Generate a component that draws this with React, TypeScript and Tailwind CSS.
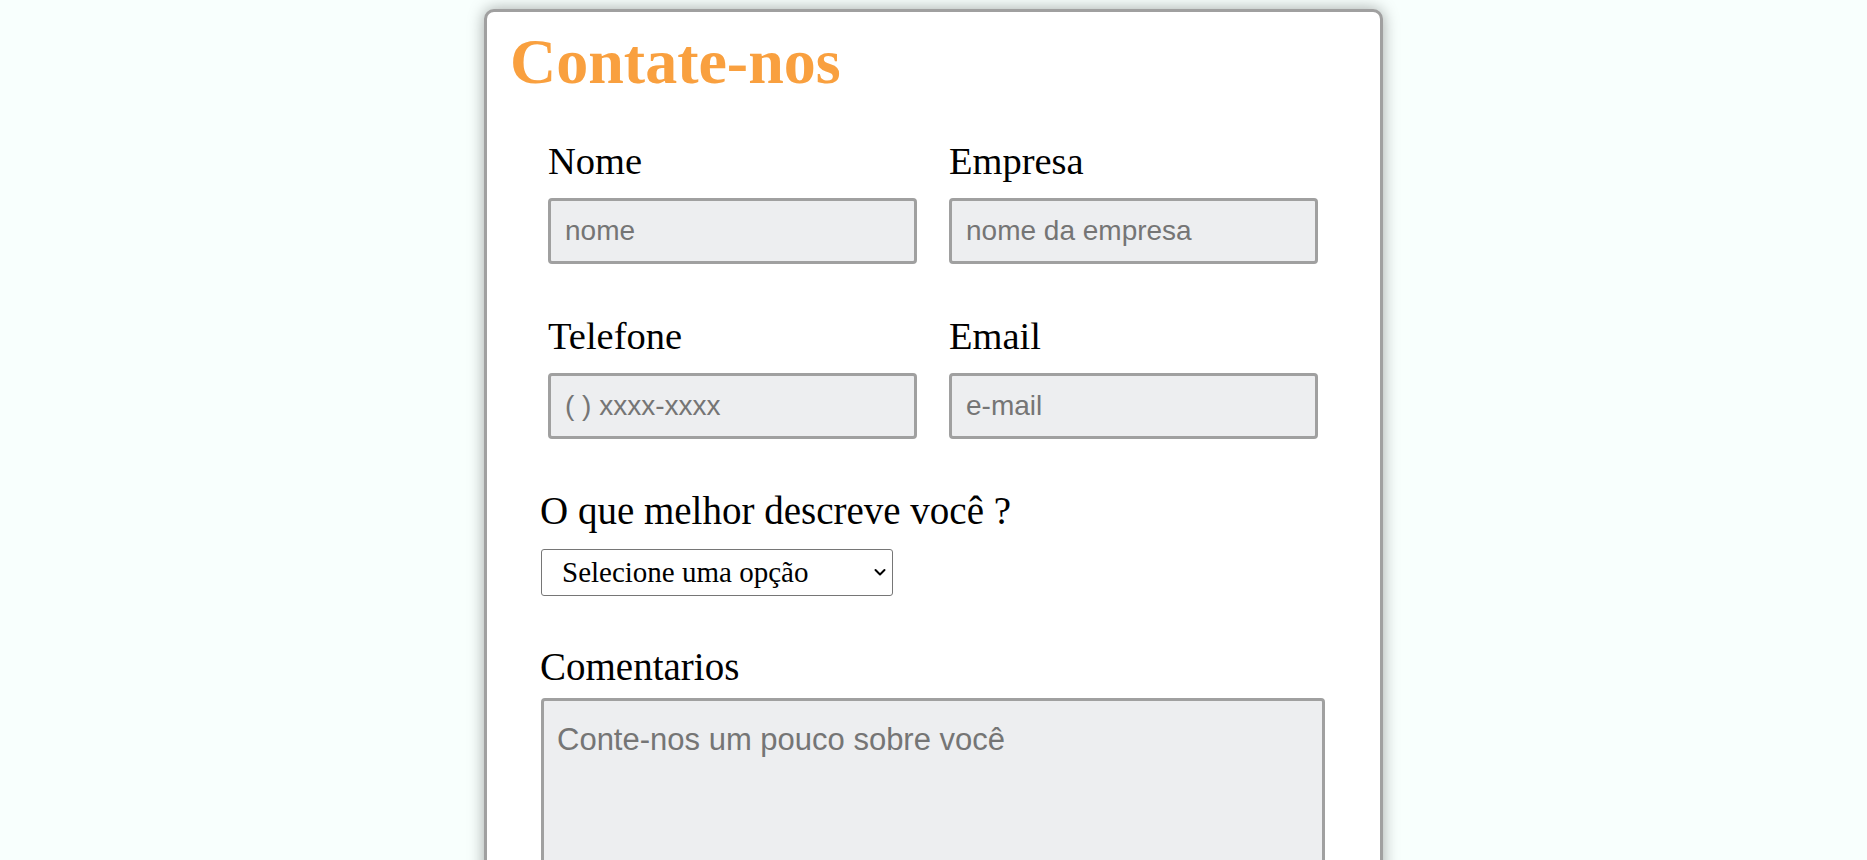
import React from 'react';

const serif = "font-['Liberation_Serif',serif]";

function Field({ label, placeholder, type = 'text' }: { label: string; placeholder: string; type?: string }) {
  return (
    <div className="flex flex-col">
      <label className={`${serif} text-[38.5px] leading-[44px] text-black mb-[15px]`}>{label}</label>
      <input
        type={type}
        placeholder={placeholder}
        className="h-[66px] w-full rounded-[4px] border-[3px] border-[#a0a0a0] bg-[#edeef0] pl-[14px] font-['Liberation_Sans',Arial,sans-serif] text-[28px] text-black outline-none placeholder:text-[#757575]"
      />
    </div>
  );
}

export default function App() {
  return (
    <div className="h-[860px] overflow-hidden bg-[#f8fffd]">
      <div className="mx-auto mt-[9px] w-[899px] rounded-[10px] border-[3px] border-[#a0a0a0] bg-white pt-[14px] pl-[23px] pb-10 shadow-[0_0_16px_rgba(0,0,0,0.35)]">
        <h1 className={`${serif} text-[64px] leading-[72px] font-bold text-[#f9a03f]`}>Contate-nos</h1>

        {/* inputs */}
        <div className="mt-[41px] ml-[38px] grid grid-cols-[369px_369px] gap-x-[32px] gap-y-[50px]">
          <Field label="Nome" placeholder="nome" />
          <Field label="Empresa" placeholder="nome da empresa" />
          <Field label="Telefone" placeholder="( ) xxxx-xxxx" type="tel" />
          <Field label="Email" placeholder="e-mail" type="email" />
        </div>

        <div className="mt-[50px] ml-[30px] flex flex-col items-start">
          <label className={`${serif} text-[39px] leading-[44px] text-black`}>O que melhor descreve você ?</label>
          <div className="relative mt-[16px] ml-[1px]">
            <select
              defaultValue=""
              className={`${serif} h-[47px] w-[352px] appearance-none rounded-[3px] border border-[#767676] bg-white pl-[20px] text-[29px] text-black outline-none`}
            >
              <option value="" disabled>Selecione uma opção</option>
              <option value="estudante">Estudante</option>
              <option value="profissional">Profissional</option>
              <option value="empresa">Empresa</option>
            </select>
            <svg
              className="pointer-events-none absolute right-[7px] top-[19px]"
              width="12"
              height="9"
              viewBox="0 0 12 9"
              fill="none"
            >
              <path d="M1.5 2 L6 6.5 L10.5 2" stroke="#000" strokeWidth="2" strokeLinecap="round" strokeLinejoin="round" />
            </svg>
          </div>
        </div>

        <div className="mt-[49px] ml-[30px] flex flex-col">
          <label className={`${serif} text-[39px] leading-[44px] text-black`}>Comentarios</label>
          <textarea
            placeholder="Conte-nos um pouco sobre você"
            className="mt-[9px] ml-[1px] h-[220px] w-[784px] resize-none rounded-[4px] border-[3px] border-[#a0a0a0] bg-[#edeef0] pt-[16px] pl-[13px] font-['Liberation_Sans',Arial,sans-serif] text-[31px] text-black outline-none placeholder:text-[#757575]"
          />
        </div>
      </div>
    </div>
  );
}
